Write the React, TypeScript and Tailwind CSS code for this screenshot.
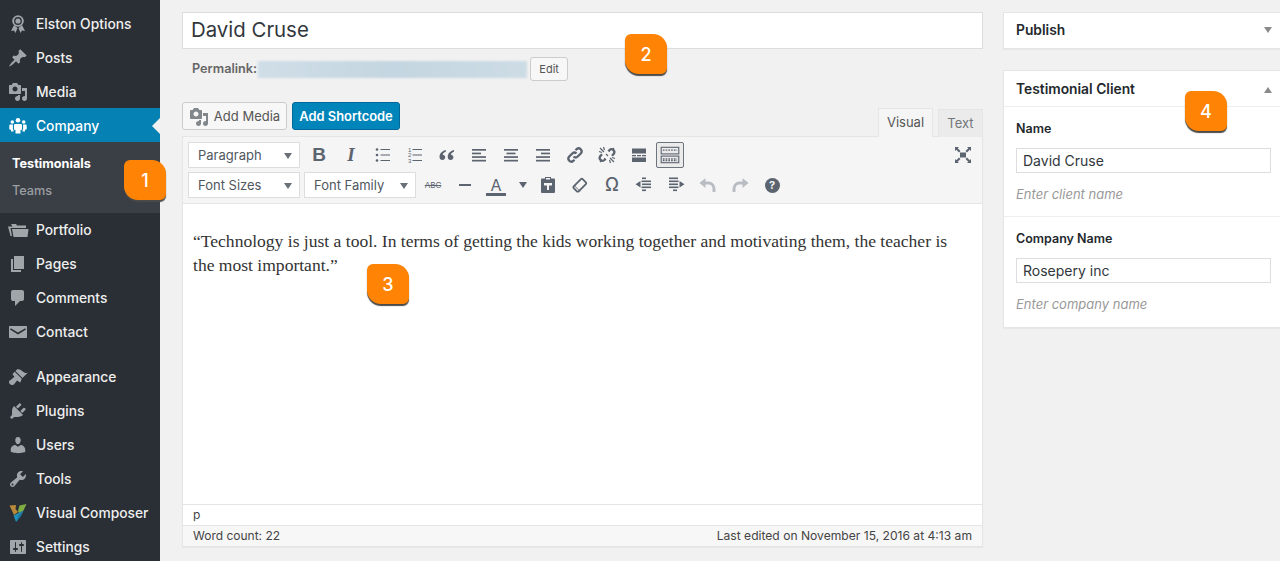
import React from 'react';

const sans = { fontFamily: 'Inter, "Liberation Sans", sans-serif' };

type IconProps = { className?: string };

const Dash = ({ d, className }: IconProps & { d: string }) => (
  <svg viewBox="0 0 20 20" width="20" height="20" fill="currentColor" className={className}>
    <path d={d} />
  </svg>
);

const AwardIcon = ({ className }: IconProps) => (
  <svg viewBox="0 0 20 20" width="20" height="20" className={className} fill="currentColor">
    <path d="M6 11l-3 6 3-.5 1.5 2.5 2-5zM14 11l3 6-3-.5-1.500 2.500-2-5z" />
    <circle cx="10" cy="7" r="5.800" />
    <circle cx="10" cy="7" r="3.900" fill="#2a2e35" />
    <circle cx="10" cy="7" r="2.600" />
  </svg>
);

const FolderIcon = ({ className }: IconProps) => (
  <svg viewBox="0 0 22 20" width="22" height="20" className={className} fill="currentColor">
    <path d="M1 6.500h4.500L4 4h5l1 1.500h9V8H3.500L5 16H3.500z" />
    <path d="M5 9h16.500l-1 8H6.500z" />
  </svg>
);

const GroupsIcon = ({ className }: IconProps) => (
  <svg viewBox="0 0 20 20" width="20" height="20" className={className} fill="currentColor">
    <circle cx="10" cy="4.200" r="2.300" />
    <circle cx="4.300" cy="6" r="1.800" />
    <circle cx="15.700" cy="6" r="1.800" />
    <path d="M7.200 8h5.600c.8 0 1.200.6 1.200 1.300V13c0 .6-.7 1-1.500 1v3.500h-5V14c-.8 0-1.500-.4-1.500-1V9.300C6 8.600 6.400 8 7.200 8z" />
    <path d="M2.300 8.500h2.600v5h.6v2H3v-1.800c-1 0-1.700-.4-1.700-1V10c0-.8.3-1.500 1-1.500zM15.100 8.500h2.600c.7 0 1 .7 1 1.500v2.700c0 .6-.7 1-1.700 1v1.800h-2.500v-2h.6z" />
  </svg>
);

const MailIcon = ({ className }: IconProps) => (
  <svg viewBox="0 0 20 20" width="20" height="20" className={className} fill="currentColor">
    <path d="M1.500 4h17c.3 0 .5.2.5.5v11c0 .3-.2.5-.5.5h-17c-.3 0-.5-.2-.5-.5v-11c0-.3.2-.5.5-.5zm1.300 2.200l-.8 1.200L10 12.500l8-5.100-.8-1.200L10 10.500z" fillRule="evenodd" />
  </svg>
);

const ComposerIcon = () => (
  <svg viewBox="0 0 20 20" width="20" height="20">
    <path d="M1.500 2.500L8 2l-.5 4L10 9 6 12z" fill="#b98a3a" />
    <path d="M10 8l1.500-5.500L18.500 1 15.500 7.500 11 10z" fill="#7fae42" />
    <path d="M5.500 12.500L10.500 10l5-2.500L13 13l-5 6z" fill="#1f8fb5" />
    <path d="M11 12l4-3.500L13 13l-4 5z" fill="#1f6f9a" />
  </svg>
);

const paths = {
  post: 'M10.44 3.02l1.82-1.82 6.36 6.35-1.83 1.82c-1.05-.68-2.48-.57-3.41.36l-.75.75c-.92.93-1.04 2.35-.35 3.41l-1.83 1.82-2.41-2.41-2.8 2.79c-.42.42-3.38 2.71-3.8 2.29s1.86-3.39 2.28-3.81l2.79-2.79L4.1 9.36l1.83-1.82c1.05.69 2.48.57 3.4-.36l.75-.75c.93-.92 1.05-2.35.36-3.41z',
  media: 'M13 11V4c0-.55-.45-1-1-1h-1.67L9 1H5L3.67 3H2c-.55 0-1 .45-1 1v7c0 .55.45 1 1 1h10c.55 0 1-.45 1-1zM7 4.500c1.38 0 2.500 1.120 2.500 2.500S8.380 9.500 7 9.500 4.500 8.380 4.500 7 5.620 4.500 7 4.500zM14 6h5v10.500c0 1.380-1.120 2.500-2.500 2.500S14 17.880 14 16.500s1.120-2.500 2.500-2.500c.17 0 .34.02.5.05V9h-3V6zm-4 8.050V13h2v3.500c0 1.380-1.120 2.500-2.500 2.500S7 17.880 7 16.500 8.120 14 9.500 14c.17 0 .34.02.5.05z',
  page: 'M6 15V2h10v13H6zm-1 1h8v2H3V5h2v11z',
  comment: 'M5 2h9c1.100 0 2 .9 2 2v7c0 1.100-.9 2-2 2h-2l-5 5v-5H5c-1.100 0-2-.9-2-2V4c0-1.100.9-2 2-2z',
  appearance: 'M14.48 11.06L7.41 3.99l1.5-1.5c.5-.56 2.3-.47 3.51.32 1.21.8 1.43 1.28 2.91 2.1 1.18.64 2.45 1.26 4.45.85zm-.71.71L6.7 4.7 4.93 6.47c-.39.39-.39 1.02 0 1.41l1.06 1.06c.39.39.39 1.03 0 1.42-.6.6-1.43 1.11-2.21 1.69-.35.26-.7.53-1.01.84C1.43 13.23 1 14.09 1 15c0 1.65 1.35 3 3 3 .92 0 1.77-.43 2.12-.78.3-.31.58-.65.84-1 .58-.79 1.09-1.61 1.69-2.21.39-.39 1.02-.39 1.41 0l1.06 1.06c.39.39 1.02.39 1.41 0z',
  plugin: 'M13.11 4.36L9.87 7.6 8 5.73l3.24-3.24c.35-.34 1.05-.2 1.56.32.52.51.66 1.21.31 1.55zm-8 1.77l.91-1.12 9.01 9.01-1.19.84c-.71.71-2.63 1.16-3.82 1.16H6.14L4.9 17.26c-.59.59-1.54.59-2.12 0-.59-.58-.59-1.53 0-2.12l1.24-1.24v-3.88c0-1.13.4-3.19 1.09-3.89zm7.26 3.97l3.24-3.24c.34-.35 1.04-.21 1.55.31.52.51.66 1.21.31 1.55l-3.24 3.25z',
  user: 'M10 9.25c-2.27 0-2.73-3.44-2.73-3.44C7 4.02 7.82 2 9.97 2c2.16 0 2.98 2.02 2.71 3.81 0 0-.41 3.44-2.68 3.44zm0 2.57L12.72 10c2.39 0 4.52 2.33 4.52 4.53v2.49s-3.65 1.13-7.24 1.13c-3.65 0-7.24-1.13-7.24-1.13v-2.49c0-2.25 1.94-4.48 4.47-4.48z',
  tools: 'M16.68 9.77c-1.34 1.34-3.3 1.67-4.95.99l-5.41 6.52c-.99.99-2.59.99-3.58 0s-.99-2.59 0-3.57l6.52-5.42c-.68-1.65-.35-3.61.99-4.95 1.28-1.28 3.12-1.62 4.72-1.06l-2.89 2.89 2.82 2.82 2.86-2.87c.53 1.58.18 3.39-1.08 4.65zM3.81 16.21c.4.39 1.04.39 1.43 0 .4-.4.4-1.04 0-1.43-.39-.4-1.03-.4-1.43 0-.39.39-.39 1.03 0 1.43z',
  settings: 'M18 16V4c0-.55-.45-1-1-1H3c-.55 0-1 .45-1 1v12c0 .55.45 1 1 1h14c.55 0 1-.45 1-1zM8 11h1c.55 0 1 .45 1 1s-.45 1-1 1H8v1.500c0 .28-.22.5-.5.5s-.5-.22-.5-.5V13H6c-.55 0-1-.45-1-1s.45-1 1-1h1V5.500c0-.28.22-.5.5-.5s.5.22.5.5V11zm5-2h-1c-.55 0-1-.45-1-1s.45-1 1-1h1V5.500c0-.28.22-.5.5-.5s.5.22.5.5V7h1c.55 0 1 .45 1 1s-.45 1-1 1h-1v5.500c0 .28-.22.5-.5.5s-.5-.22-.5-.5V9z',
};

const MenuItem = ({ icon, label, active, nudge }: { icon: React.ReactNode; label: string; active?: boolean; nudge?: boolean }) => (
  <div className={`relative flex h-[34px] items-center text-[13.8px] font-medium ${nudge ? 'pt-[2px]' : ''} ${active ? 'bg-[#0581b4] text-white' : 'text-[#eeeeee]'}`}>
    <span className={`flex w-9 justify-center ${active ? 'text-white' : 'text-[#a0a5aa]'}`}>{icon}</span>
    <span>{label}</span>
    {active && (
      <span className="ml-auto h-0 w-0 border-y-[8px] border-r-[8px] border-y-transparent border-r-[#f1f1f1]" />
    )}
  </div>
);

const Sidebar = () => (
  <aside className="w-40 shrink-0 bg-[#2a2e35] pt-[6px]">
    <MenuItem nudge icon={<AwardIcon />} label="Elston Options" />
    <MenuItem nudge icon={<Dash d={paths.post} />} label="Posts" />
    <MenuItem nudge icon={<Dash d={paths.media} />} label="Media" />
    <MenuItem nudge icon={<GroupsIcon />} label="Company" active />
    <div className="flex h-[71px] flex-col bg-[#3a3e45] pl-3 pt-2 text-[12.7px] leading-[27px]">
      <div className="font-bold text-white">Testimonials</div>
      <div className="font-medium text-[#9a9ea3]">Teams</div>
    </div>
    <MenuItem icon={<FolderIcon />} label="Portfolio" />
    <MenuItem icon={<Dash d={paths.page} />} label="Pages" />
    <MenuItem icon={<Dash d={paths.comment} />} label="Comments" />
    <MenuItem icon={<MailIcon />} label="Contact" />
    <div className="h-[11px]" />
    <MenuItem icon={<Dash d={paths.appearance} />} label="Appearance" />
    <MenuItem icon={<Dash d={paths.plugin} />} label="Plugins" />
    <MenuItem icon={<Dash d={paths.user} />} label="Users" />
    <MenuItem icon={<Dash d={paths.tools} />} label="Tools" />
    <MenuItem icon={<ComposerIcon />} label="Visual Composer" />
    <MenuItem icon={<Dash d={paths.settings} />} label="Settings" />
  </aside>
);

const Badge = ({ n, className }: { n: number; className: string }) => (
  <div
    className={`absolute flex h-10 w-[42px] items-center justify-center rounded-tl-[6px] rounded-tr-[14px] rounded-br-[6px] rounded-bl-[14px] bg-[#ff8405] text-[18px] font-medium text-white shadow-[0_2px_1px_#4a4a4a] ${className}`}
  >
    {n}
  </div>
);

const Select = ({ label, width }: { label: string; width: string }) => (
  <div className={`flex h-[26px] items-center justify-between border border-[#dddddd] bg-white pl-[9px] pr-[7px] pt-[2px] text-[13px] text-[#50575e] ${width}`}>
    <span>{label}</span>
    <span className="h-0 w-0 border-x-[4px] border-t-[6px] border-x-transparent border-t-[#6a7078]" />
  </div>
);

const Tool = ({ children, width = 'w-8' }: { children: React.ReactNode; width?: string }) => (
  <div className={`flex h-[26px] shrink-0 items-center justify-center text-[#5c6470] ${width}`}>{children}</div>
);

const Svg = ({ children }: { children: React.ReactNode }) => (
  <svg viewBox="0 0 20 20" width="20" height="20" fill="currentColor">{children}</svg>
);

const Lines = ({ rows }: { rows: [number, number][] }) => (
  <Svg>
    {rows.map(([x, w], i) => (
      <rect key={i} x={x} y={4 + i * 3.6} width={w} height="1.700" />
    ))}
  </Svg>
);

const ToolbarRows = () => (
  <div className="bg-[#f5f5f5] px-[5px] pt-[5px]">
    <div className="flex h-[26px] items-center">
      <Select label="Paragraph" width="w-[112px]" />
      <div className="w-[3px]" />
      <Tool><span className="text-[19px] font-bold" style={{ fontFamily: '"Liberation Sans", sans-serif' }}>B</span></Tool>
      <Tool><span className="text-[19px] font-bold italic" style={{ fontFamily: '"Liberation Serif", serif' }}>I</span></Tool>
      <Tool>
        <Svg>
          <circle cx="4" cy="4.500" r="1.300" /><circle cx="4" cy="10" r="1.300" /><circle cx="4" cy="15.500" r="1.300" />
          <rect x="7.500" y="4" width="9.500" height="1" /><rect x="7.500" y="9.500" width="9.500" height="1" /><rect x="7.500" y="15" width="9.500" height="1" />
        </Svg>
      </Tool>
      <Tool>
        <Svg>
          <rect x="7.500" y="4" width="9.500" height="1" /><rect x="7.500" y="9.500" width="9.500" height="1" /><rect x="7.500" y="15" width="9.500" height="1" />
          <text x="3" y="6.500" fontSize="6" fontFamily="Liberation Sans">1</text>
          <text x="3" y="12" fontSize="6" fontFamily="Liberation Sans">2</text>
          <text x="3" y="17.500" fontSize="6" fontFamily="Liberation Sans">3</text>
        </Svg>
      </Tool>
      <Tool>
        <Svg>
          <path d="M8.800 5C6 5.800 2.500 7.800 2.500 11.800 2.500 14 3.800 15 5.400 15c1.600 0 2.800-1.100 2.800-2.700 0-1.500-1-2.500-2.500-2.500.2-1.200 1.400-2.300 3.100-3zM17 5c-2.800.8-6.300 2.800-6.300 6.800 0 2.200 1.300 3.200 2.900 3.200 1.600 0 2.800-1.100 2.800-2.700 0-1.500-1-2.500-2.500-2.500.2-1.200 1.400-2.300 3.100-3z" />
        </Svg>
      </Tool>
      <Tool><Lines rows={[[3, 14], [3, 9], [3, 14], [3, 14]]} /></Tool>
      <Tool><Lines rows={[[3, 14], [5.5, 9], [3, 14], [3, 14]]} /></Tool>
      <Tool><Lines rows={[[3, 14], [8, 9], [3, 14], [3, 14]]} /></Tool>
      <Tool>
        <svg viewBox="0 0 20 20" width="20" height="20" fill="none" stroke="currentColor" strokeWidth="2.300">
          <path d="M8.500 11.500a3 3 0 0 0 4.200 0l3.300-3.300a3 3 0 0 0-4.200-4.200l-1.300 1.300" />
          <path d="M11.500 8.500a3 3 0 0 0-4.200 0L4 11.800A3 3 0 0 0 8.200 16l1.300-1.300" />
        </svg>
      </Tool>
      <Tool>
        <svg viewBox="0 0 20 20" width="20" height="20" fill="none" stroke="currentColor" strokeWidth="2.300">
          <path d="M11.500 6.500l1-1.500a2.900 2.900 0 0 1 4.500 3.500l-2 2.200" />
          <path d="M8.500 13.500l-1 1.500A2.900 2.900 0 0 1 3 11.500l2-2.200" />
          <path d="M3 3l4 4M6.500 2l1 3M2 6.500l3 1M17 17l-4-4M13.500 18l-1-3M18 13.500l-3-1M9 9l2 2M3 17l2-2M17 3l-2 2" strokeWidth="1.200" />
        </svg>
      </Tool>
      <Tool>
        <Svg>
          <rect x="3" y="3.500" width="14" height="5" />
          <rect x="3" y="10" width="4" height="1.300" /><rect x="8" y="10" width="4" height="1.300" /><rect x="13" y="10" width="4" height="1.300" />
          <rect x="3" y="12.500" width="14" height="4.500" />
        </Svg>
      </Tool>
      <div className="ml-px flex h-[26px] w-[28px] shrink-0 items-center justify-center rounded-[2px] border border-[#6d747c] bg-[#ebebeb] text-[#5c6470]">
        <svg viewBox="0 0 20 20" width="22" height="22" fill="none" stroke="currentColor" strokeWidth="1">
          <rect x="2" y="3" width="16" height="6" />
          <rect x="2" y="11" width="16" height="6" />
          <path d="M3.500 5.500h13M3.500 13.500h13M3.500 15h13" strokeDasharray="1.500 1" strokeWidth="1.200" />
        </svg>
      </div>
      <div className="ml-auto mr-[4px] text-[#5c6470]">
        <Svg>
          <path d="M7 7.500h6v5H7z" />
          <path d="M2 2h4L4.700 3.300 7.500 6 6 7.500 3.300 4.700 2 6zM18 2v4l-1.300-1.300L14 7.500 12.500 6l2.800-2.700L14 2zM2 18v-4l1.300 1.300L6 12.500 7.500 14l-2.800 2.700L6 18zM18 18h-4l1.300-1.300L12.500 14l1.500-1.500 2.700 2.800L18 14z" />
        </Svg>
      </div>
    </div>
    <div className="mt-1 flex h-[26px] items-center">
      <Select label="Font Sizes" width="w-[112px]" />
      <div className="w-1" />
      <Select label="Font Family" width="w-[112px]" />
      <div className="w-px" />
      <Tool><span className="text-[8px] leading-none line-through">ABC</span></Tool>
      <Tool><Svg><rect x="4" y="9" width="12" height="2" /></Svg></Tool>
      <Tool width="w-[51px]">
        <span className="flex flex-col items-center pt-[2px]">
          <span className="text-[16px] font-normal leading-[16px]">A</span>
          <span className="h-[3px] w-[20px] bg-[#5c6470]" />
        </span>
        <span className="ml-[13px] h-0 w-0 border-x-[4px] border-t-[6px] border-x-transparent border-t-[#5c6470]" />
      </Tool>
      <Tool>
        <Svg>
          <path d="M7 2h6v1.500h3c.5 0 1 .5 1 1V17c0 .5-.5 1-1 1H4c-.5 0-1-.5-1-1V4.500c0-.5.5-1 1-1h3zm1 1v1.500h4V3zM6 8v2.500h3V15h2v-4.500h3V8z" fillRule="evenodd" />
        </Svg>
      </Tool>
      <Tool>
        <svg viewBox="0 0 20 20" width="18" height="18" fill="none" stroke="currentColor" strokeWidth="2">
          <path d="M3 11.500L11 3.500c.6-.6 1.400-.6 2 0L16.500 7c.6.6.6 1.400 0 2L8.500 17c-.6.6-1.400.6-2 0L3 13.500c-.6-.6-.6-1.400 0-2z" strokeLinejoin="round" />
          <path d="M4 11l6 6" strokeWidth="1" />
        </svg>
      </Tool>
      <Tool><span className="text-[18px] font-medium leading-none">Ω</span></Tool>
      <Tool>
        <Svg>
          <rect x="8" y="2.500" width="4" height="1.600" /><rect x="7.500" y="5.500" width="9.500" height="1.600" /><rect x="8" y="8.500" width="9" height="1.600" /><rect x="7.500" y="11.500" width="9.500" height="1.600" /><rect x="8" y="14.500" width="4" height="1.600" />
          <path d="M6.500 6v6.500L1.500 9.300z" />
        </Svg>
      </Tool>
      <Tool>
        <Svg>
          <rect x="3" y="2.500" width="9" height="1.600" /><rect x="3" y="5.500" width="9.500" height="1.600" /><rect x="3" y="8.500" width="9" height="1.600" /><rect x="3" y="11.500" width="9.500" height="1.600" /><rect x="7" y="14.500" width="4" height="1.600" />
          <path d="M13.500 6v6.500l5-3.200z" />
        </Svg>
      </Tool>
      <Tool>
        <svg viewBox="0 0 20 20" width="20" height="20">
          <path d="M7.500 3L1.500 8l6 5z" fill="#b9bdc3" />
          <path d="M6 8h4.500c3.500 0 5.500 3 5.500 6v3" fill="none" stroke="#b9bdc3" strokeWidth="3" />
        </svg>
      </Tool>
      <Tool>
        <svg viewBox="0 0 20 20" width="20" height="20">
          <path d="M12.500 3l6 5-6 5z" fill="#b9bdc3" />
          <path d="M14 8H9.500C6 8 4 11 4 14v3" fill="none" stroke="#b9bdc3" strokeWidth="3" />
        </svg>
      </Tool>
      <Tool>
        <span className="flex h-[15px] w-[15px] items-center justify-center rounded-full bg-[#5c6470] text-[11px] font-bold leading-none text-[#f5f5f5]">?</span>
      </Tool>
    </div>
  </div>
);

const Editor = () => (
  <div className="border border-[#e5e5e5] bg-white shadow-[0_1px_1px_rgba(0,0,0,0.04)]">
    <div className="h-[67px] border-b border-[#e5e5e5] bg-[#f5f5f5]">
      <ToolbarRows />
    </div>
    <div className="h-[300px] px-[10px] pt-[25px] text-[17.56px] leading-6 text-[#333333]" style={{ fontFamily: '"Liberation Serif", serif' }}>
      <p className="w-[770px]">“Technology is just a tool. In terms of getting the kids working together and motivating them, the teacher is the most important.”</p>
    </div>
    <div className="flex h-[21px] items-center border-t border-[#e5e5e5] px-[10px] text-[12px] text-[#444444]">p</div>
    <div className="flex h-[21px] items-center justify-between border-t border-[#e5e5e5] bg-[#f7f7f7] px-[10px] text-[12px] text-[#444444]">
      <span>Word count: 22</span>
      <span className="text-[12.1px]">Last edited on November 15, 2016 at 4:13 am</span>
    </div>
  </div>
);

const Field = ({ label, value, hint, bordered }: { label: string; value: string; hint: string; bordered?: boolean }) => (
  <div className={`h-[110px] px-3 pt-[12px] ${bordered ? 'border-b border-[#eeeeee]' : ''}`}>
    <div className="text-[12.5px] font-semibold leading-[20px] text-[#23282d]">{label}</div>
    <div className="mt-[9px] flex h-[25px] w-[255px] items-center border border-[#dddddd] bg-white px-[6px] text-[14px] text-[#32373c]">{value}</div>
    <div className="mt-3 text-[13px] italic leading-[18px] text-[#999999]">{hint}</div>
  </div>
);

const ChevronMark = ({ up }: { up: boolean }) => (
  <span className={`h-0 w-0 border-x-[4px] border-x-transparent ${up ? 'border-b-[6px] border-b-[#8a8a8a]' : 'border-t-[6px] border-t-[#8a8a8a]'}`} />
);

const SidePanels = () => (
  <div className="ml-5 flex-1 pt-3">
    <div className="flex h-[37px] items-center justify-between border border-r-0 border-[#e5e5e5] bg-white pb-px pl-3 pr-[11px] shadow-[0_1px_1px_rgba(0,0,0,0.04)]">
      <span className="text-[13.8px] font-semibold text-[#23282d]">Publish</span>
      <ChevronMark up={false} />
    </div>
    <div className="mt-[21px] border border-r-0 border-[#e5e5e5] bg-white shadow-[0_1px_1px_rgba(0,0,0,0.04)]">
      <div className="flex h-9 items-center justify-between border-b border-[#eeeeee] pl-3 pr-[11px] pt-[2px]">
        <span className="text-[13.8px] font-semibold text-[#23282d]">Testimonial Client</span>
        <ChevronMark up />
      </div>
      <Field label="Name" value="David Cruse" hint="Enter client name" bordered />
      <Field label="Company Name" value="Rosepery inc" hint="Enter company name" />
    </div>
  </div>
);

const App: React.FC = () => {
  return (
    <div className="relative flex h-[561px] w-[1280px] overflow-hidden bg-[#f1f1f1]" style={sans}>
      <Sidebar />
      <main className="ml-[22px] w-[801px] shrink-0 pt-3">
        <div className="flex h-[37px] items-center border border-[#dddddd] bg-white pl-2 text-[20.4px] text-[#32373c]">David Cruse</div>
        <div className="mt-2 flex h-6 items-center pl-[10px] text-[12.7px]">
          <span className="font-semibold text-[#666666]">Permalink:</span>
          <span className="ml-px h-[17px] w-[269px] bg-gradient-to-r from-[#d0dee7] via-[#c4d6e1] to-[#cddce5] blur-[1px]" />
          <span className="ml-[3px] flex h-6 w-[38px] items-center justify-center rounded-[3px] border border-[#cccccc] bg-[#f7f7f7] text-[11px] text-[#555555]">Edit</span>
        </div>
        <div className="mt-[21px] flex h-[34px] items-start">
          <div className="flex h-7 w-[105px] items-center justify-center gap-[5px] rounded-[3px] border border-[#cccccc] bg-[#f7f7f7] pt-px text-[13px] text-[#555555]">
            <span className="text-[#82878c]"><Dash d={paths.media} /></span>
            Add Media
          </div>
          <div className="ml-[5px] flex h-7 w-[108px] items-center justify-center rounded-[3px] border border-[#006799] bg-[#0085ba] pt-px text-[12.9px] font-semibold text-white">Add Shortcode</div>
          <div className="relative z-10 ml-auto flex h-[35px] items-end text-[13px] text-[#555555]">
            <div className="flex h-[29px] w-[55px] items-center justify-center border border-b-0 border-[#e5e5e5] bg-[#f5f5f5]">Visual</div>
            <div className="ml-[5px] flex h-[28px] w-[45px] items-center justify-center border border-b-0 border-[#e5e5e5] bg-[#ebebeb] text-[#72777c]">Text</div>
          </div>
        </div>
        <Editor />
      </main>
      <SidePanels />
      <Badge n={1} className="left-[124px] top-[160px]" />
      <Badge n={2} className="left-[625px] top-[34px]" />
      <Badge n={3} className="left-[367px] top-[264px]" />
      <Badge n={4} className="left-[1185px] top-[91px]" />
    </div>
  );
};

export default App;
